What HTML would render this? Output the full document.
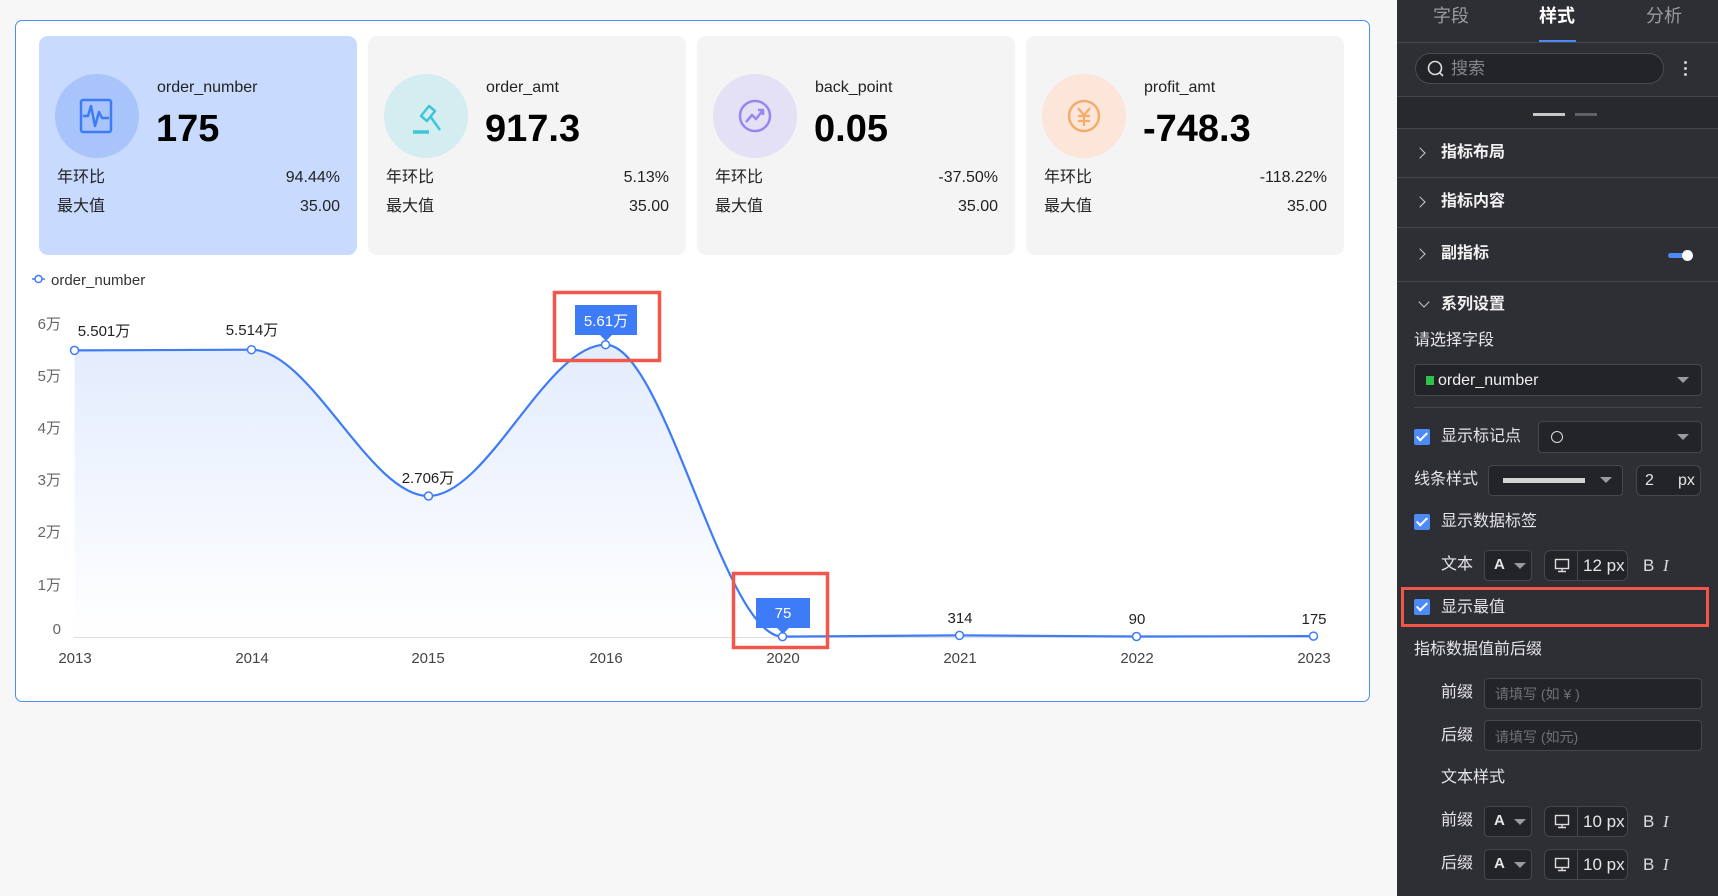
<!DOCTYPE html>
<html><head><meta charset="utf-8">
<style>
*{box-sizing:border-box;margin:0;padding:0}
body{width:1718px;height:896px;overflow:hidden;background:#f7f7f8;font-family:"Liberation Sans","Noto Sans CJK SC",sans-serif;position:relative}
.abs{position:absolute}
.outer{left:15px;top:20px;width:1355px;height:682px;border:1.5px solid #4b8cfa;border-radius:7px;background:#fff}
.card{position:absolute;top:36px;width:318px;height:219px;border-radius:9px;background:#f4f4f4}
.card .ic{position:absolute;left:16px;top:38px;width:84px;height:84px;border-radius:50%}
.card .t{position:absolute;left:118px;top:42px;font-size:16px;color:#222;line-height:20px}
.card .v{position:absolute;left:117px;top:71px;font-size:38px;font-weight:bold;color:#000;line-height:44px}
.card .r{position:absolute;left:18px;right:17px;font-size:16px;color:#222;display:flex;justify-content:space-between;align-items:center;height:22px;line-height:22px}
.panel{left:1397px;top:0;width:321px;height:896px;background:#2e2f34;color:#e6e6e8;font-size:16px}
.panel .sep{position:absolute;left:0;right:0;height:1px;background:#45464b}
.sec{position:absolute;left:44px;font-weight:bold;font-size:16px;color:#f2f2f2;line-height:20px}
.chev{position:absolute;left:22px;width:8px;height:8px;border-right:1.2px solid #ccc;border-top:1.2px solid #ccc;transform:rotate(45deg)}
.lbl{position:absolute;font-size:16px;color:#e6e6e8;line-height:20px}
.box{position:absolute;border:1px solid #46474c;background:#232428;border-radius:4px}
.cb{position:absolute;left:17px;width:16px;height:16px;background:#4c8bf5;border-radius:2px}
.cb:after{content:"";position:absolute;left:5px;top:1px;width:4px;height:9px;border-right:2px solid #fff;border-bottom:2px solid #fff;transform:rotate(45deg)}
.tri{position:absolute;width:0;height:0;border-left:6px solid transparent;border-right:6px solid transparent;border-top:6px solid #9a9ba0}
.bi{position:absolute;font-size:17px;color:#ddd;line-height:20px}
</style></head><body>
<div class="abs outer"></div>

<div class="card" style="left:39px;background:#c8dafd">
 <div class="ic" style="background:#a9c4fb"></div>
 <svg class="abs" style="left:36px;top:58px" width="44" height="44" viewBox="0 0 44 44"><rect x="6" y="6" width="30" height="32" rx="2" fill="none" stroke="#3e7bf7" stroke-width="2.5"/><path d="M8 22 L13 22 L16 12 L20 32 L24 18 L27 24 L34 24" fill="none" stroke="#3e7bf7" stroke-width="2.5" stroke-linejoin="round"/></svg>
 <div class="t">order_number</div><div class="v">175</div>
 <div class="r" style="top:131px"><span>年环比</span><span>94.44%</span></div>
 <div class="r" style="top:160px"><span>最大值</span><span>35.00</span></div>
</div>
<div class="card" style="left:368px">
 <div class="ic" style="background:#d4edf0"></div>
 <svg class="abs" style="left:36px;top:58px" width="44" height="44" viewBox="0 0 44 44"><path d="M17 22 L25 12 L31 17 L23 27 Z" fill="none" stroke="#3ec6d8" stroke-width="2.5" stroke-linejoin="round"/><path d="M26 22 L36 36" stroke="#3ec6d8" stroke-width="2.5"/><path d="M9 38 L25 38" stroke="#3ec6d8" stroke-width="3.5"/></svg>
 <div class="t">order_amt</div><div class="v">917.3</div>
 <div class="r" style="top:131px"><span>年环比</span><span>5.13%</span></div>
 <div class="r" style="top:160px"><span>最大值</span><span>35.00</span></div>
</div>
<div class="card" style="left:697px">
 <div class="ic" style="background:#e4e0f6"></div>
 <svg class="abs" style="left:36px;top:58px" width="44" height="44" viewBox="0 0 44 44"><circle cx="22" cy="22" r="15" fill="none" stroke="#9a85ef" stroke-width="2.5"/><path d="M13 28 L19 21 L23 25 L30 16 M25 16 L30 16 L30 21" fill="none" stroke="#9a85ef" stroke-width="2.5" stroke-linejoin="round"/></svg>
 <div class="t">back_point</div><div class="v">0.05</div>
 <div class="r" style="top:131px"><span>年环比</span><span>-37.50%</span></div>
 <div class="r" style="top:160px"><span>最大值</span><span>35.00</span></div>
</div>
<div class="card" style="left:1026px">
 <div class="ic" style="background:#fbe6d9"></div>
 <svg class="abs" style="left:36px;top:58px" width="44" height="44" viewBox="0 0 44 44"><circle cx="22" cy="22" r="15" fill="none" stroke="#f7ab6b" stroke-width="2.5"/><path d="M16 14 L22 21 L28 14 M22 21 L22 32 M16 22 L28 22 M16 27 L28 27" fill="none" stroke="#f7ab6b" stroke-width="2.2"/></svg>
 <div class="t">profit_amt</div><div class="v">-748.3</div>
 <div class="r" style="top:131px"><span>年环比</span><span>-118.22%</span></div>
 <div class="r" style="top:160px"><span>最大值</span><span>35.00</span></div>
</div>

<svg class="abs" style="left:0;top:0" width="1397" height="720">
 <defs><linearGradient id="g" x1="0" y1="0" x2="0" y2="1"><stop offset="0" stop-color="#e3ecfd"/><stop offset="1" stop-color="#ffffff"/></linearGradient></defs>
 <g font-family="Liberation Sans, Noto Sans CJK SC, sans-serif">
 <line x1="32" y1="279" x2="45" y2="279" stroke="#3e7bf7" stroke-width="1.5"/><circle cx="38.5" cy="279" r="3.5" fill="#fff" stroke="#3e7bf7" stroke-width="1.5"/>
 <text x="51" y="285" font-size="15" fill="#333">order_number</text>
 <g font-size="15" fill="#666" text-anchor="end">
  <text x="61" y="329">6万</text><text x="61" y="381">5万</text><text x="61" y="433">4万</text><text x="61" y="485">3万</text><text x="61" y="537">2万</text><text x="61" y="590">1万</text><text x="61" y="634">0</text>
 </g>
 <line x1="74" y1="637" x2="1314" y2="637" stroke="#d4d4d4" stroke-width="1.5"/>
 <path d="M74.5 350.4 C133.5 350.4 192.5 349.7 251.5 349.7 C310.5 349.7 369.5 496 428.5 496 C487.5 496 546.5 344.7 605.5 344.7 C664.5 344.7 723.5 636.6 782.5 636.6 C841.5 636.6 900.5 635.4 959.5 635.4 C1018.5 635.4 1077.5 636.5 1136.5 636.5 C1195.5 636.5 1254.5 636.1 1313.5 636.1 L1313.5 637 L74.5 637 Z" fill="url(#g)"/>
 <path d="M74.5 350.4 C133.5 350.4 192.5 349.7 251.5 349.7 C310.5 349.7 369.5 496 428.5 496 C487.5 496 546.5 344.7 605.5 344.7 C664.5 344.7 723.5 636.6 782.5 636.6 C841.5 636.6 900.5 635.4 959.5 635.4 C1018.5 635.4 1077.5 636.5 1136.5 636.5 C1195.5 636.5 1254.5 636.1 1313.5 636.1" fill="none" stroke="#3e7bf7" stroke-width="2.2"/>
 <g fill="#fff" stroke="#3e7bf7" stroke-width="1.5">
  <circle cx="74.5" cy="350.4" r="4"/><circle cx="251.5" cy="349.7" r="4"/><circle cx="428.5" cy="496" r="4"/><circle cx="605.5" cy="344.7" r="4"/><circle cx="782.5" cy="636.6" r="4"/><circle cx="959.5" cy="635.4" r="4"/><circle cx="1136.5" cy="636.5" r="4"/><circle cx="1313.5" cy="636.1" r="4"/>
 </g>
 <g font-size="15" fill="#222" text-anchor="middle">
  <text x="104" y="336">5.501万</text><text x="252" y="335">5.514万</text><text x="428" y="483">2.706万</text>
  <text x="960" y="623">314</text><text x="1137" y="624">90</text><text x="1314" y="624">175</text>
 </g>
 <rect x="575" y="305" width="62" height="30" fill="#3e7bf7"/><path d="M600 335 L606 341 L612 335Z" fill="#3e7bf7"/>
 <text x="606" y="326" font-size="15" fill="#fff" text-anchor="middle">5.61万</text>
 <rect x="756" y="598" width="54" height="30" fill="#3e7bf7"/><path d="M777 628 L783 634 L789 628Z" fill="#3e7bf7"/>
 <text x="783" y="618" font-size="15" fill="#fff" text-anchor="middle">75</text>
 <rect x="554.5" y="292.5" width="105" height="68" fill="none" stroke="#f2564a" stroke-width="3.5"/>
 <rect x="733.5" y="573.5" width="94" height="74" fill="none" stroke="#f2564a" stroke-width="3.5"/>
 <g font-size="15" fill="#444" text-anchor="middle">
  <text x="75" y="663">2013</text><text x="252" y="663">2014</text><text x="428" y="663">2015</text><text x="606" y="663">2016</text><text x="783" y="663">2020</text><text x="960" y="663">2021</text><text x="1137" y="663">2022</text><text x="1314" y="663">2023</text>
 </g>
 </g>
</svg>

<div class="abs panel">
 <div class="lbl" style="left:36px;top:6px;font-size:18px;color:#9a9ba0">字段</div>
 <div class="lbl" style="left:142px;top:6px;font-size:18px;color:#fff;font-weight:bold">样式</div>
 <div class="lbl" style="left:249px;top:6px;font-size:18px;color:#9a9ba0">分析</div>
 <div class="abs" style="left:142px;top:40px;width:37px;height:2px;background:#4c8bf5"></div>
 <div class="sep" style="top:42px"></div>
 <div class="abs" style="left:18px;top:53px;width:249px;height:31px;border-radius:16px;background:#232428;border:1px solid #4a4b50"></div>
 <svg class="abs" style="left:30px;top:60px" width="18" height="18" viewBox="0 0 18 18"><circle cx="8" cy="8" r="6.5" fill="none" stroke="#ddd" stroke-width="1.6"/><path d="M12.5 12.5 L16 16" stroke="#ddd" stroke-width="1.6"/></svg>
 <div class="lbl" style="left:54px;top:59px;font-size:17px;color:#85868b">搜索</div>
 <div class="abs" style="left:287px;top:61px;width:3px;height:3px;background:#ccc;border-radius:50%;box-shadow:0 6px 0 #ccc,0 12px 0 #ccc"></div>
 <div class="sep" style="top:96px"></div>
 <div class="abs" style="left:0;top:97px;width:321px;height:31px;background:#28292d"></div>
 <div class="abs" style="left:136px;top:113px;width:32px;height:3px;background:#c8c8c8"></div>
 <div class="abs" style="left:178px;top:113px;width:22px;height:3px;background:#606166"></div>
 <div class="sep" style="top:128px"></div>
 <div class="chev" style="top:149px;left:19px"></div><div class="sec" style="top:143px">指标布局</div>
 <div class="sep" style="top:177px"></div>
 <div class="chev" style="top:198px;left:19px"></div><div class="sec" style="top:192px">指标内容</div>
 <div class="sep" style="top:227px"></div>
 <div class="chev" style="top:250px;left:19px"></div><div class="sec" style="top:244px">副指标</div>
 <div class="abs" style="left:271px;top:253px;width:20px;height:5px;border-radius:3px;background:#4c8bf5"></div>
 <div class="abs" style="left:285px;top:250px;width:11px;height:11px;border-radius:50%;background:#fff"></div>
 <div class="sep" style="top:281px"></div>
 <div class="chev" style="top:298px;left:23px;transform:rotate(135deg)"></div><div class="sec" style="top:295px">系列设置</div>
 <div class="lbl" style="left:17px;top:331px">请选择字段</div>
 <div class="box" style="left:17px;top:364px;width:288px;height:32px"></div>
 <div class="abs" style="left:29px;top:376px;width:8px;height:9px;background:#2ec24a"></div>
 <div class="lbl" style="left:41px;top:371px;color:#eee">order_number</div>
 <div class="tri" style="left:280px;top:377px"></div>
 <div class="sep" style="top:407px;left:17px;right:16px"></div>
 <div class="cb" style="top:429px"></div><div class="lbl" style="left:44px;top:427px">显示标记点</div>
 <div class="box" style="left:141px;top:421px;width:164px;height:32px"></div>
 <div class="abs" style="left:154px;top:431px;width:12px;height:12px;border-radius:50%;border:1.5px solid #ddd"></div>
 <div class="tri" style="left:280px;top:434px"></div>
 <div class="lbl" style="left:17px;top:470px">线条样式</div>
 <div class="box" style="left:91px;top:465px;width:135px;height:31px"></div>
 <div class="abs" style="left:106px;top:478px;width:82px;height:5px;background:#d4d4d4"></div>
 <div class="tri" style="left:203px;top:477px"></div>
 <div class="box" style="left:239px;top:465px;width:65px;height:31px;border-radius:6px"></div>
 <div class="lbl" style="left:248px;top:471px">2</div><div class="lbl" style="left:281px;top:471px">px</div>
 <div class="cb" style="top:514px"></div><div class="lbl" style="left:44px;top:512px">显示数据标签</div>
 <div class="lbl" style="left:44px;top:555px">文本</div>
 <div class="box" style="left:87px;top:550px;width:48px;height:31px"></div>
 <div class="lbl" style="left:97px;top:555px;font-weight:bold;font-size:15px">A</div><div class="tri" style="left:117px;top:563px"></div>
 <div class="box" style="left:147px;top:550px;width:84px;height:31px;border-radius:6px"></div>
 <div class="abs" style="left:180px;top:550px;width:1px;height:31px;background:#46474c"></div>
 <svg class="abs" style="left:157px;top:558px" width="16" height="15"><rect x="1.5" y="1.5" width="13" height="9" fill="none" stroke="#ddd" stroke-width="1.4"/><path d="M4 13.5 H12 M8 10.5 V13.5" stroke="#ddd" stroke-width="1.4"/></svg>
 <div class="lbl" style="left:186px;top:556px;font-size:17px">12 px</div>
 <div class="bi" style="left:246px;top:556px">B</div><div class="bi" style="left:266px;top:556px;font-style:italic;font-family:'Liberation Serif',serif">I</div>
 <div class="abs" style="left:4px;top:587px;width:308px;height:40px;border:3px solid #f2564a"></div>
 <div class="cb" style="top:599px"></div><div class="lbl" style="left:44px;top:598px">显示最值</div>
 <div class="lbl" style="left:17px;top:640px">指标数据值前后缀</div>
 <div class="lbl" style="left:44px;top:683px">前缀</div>
 <div class="box" style="left:87px;top:678px;width:218px;height:31px"></div>
 <div class="lbl" style="left:98px;top:684px;font-size:14px;color:#6f7075">请填写 (如 ¥ )</div>
 <div class="lbl" style="left:44px;top:726px">后缀</div>
 <div class="box" style="left:87px;top:720px;width:218px;height:31px"></div>
 <div class="lbl" style="left:98px;top:727px;font-size:14px;color:#6f7075">请填写 (如元)</div>
 <div class="lbl" style="left:44px;top:768px">文本样式</div>
 <div class="lbl" style="left:44px;top:811px">前缀</div>
 <div class="box" style="left:87px;top:806px;width:48px;height:31px"></div>
 <div class="lbl" style="left:97px;top:811px;font-weight:bold;font-size:15px">A</div><div class="tri" style="left:117px;top:819px"></div>
 <div class="box" style="left:147px;top:806px;width:84px;height:31px;border-radius:6px"></div>
 <div class="abs" style="left:180px;top:806px;width:1px;height:31px;background:#46474c"></div>
 <svg class="abs" style="left:157px;top:814px" width="16" height="15"><rect x="1.5" y="1.5" width="13" height="9" fill="none" stroke="#ddd" stroke-width="1.4"/><path d="M4 13.5 H12 M8 10.5 V13.5" stroke="#ddd" stroke-width="1.4"/></svg>
 <div class="lbl" style="left:186px;top:812px;font-size:17px">10 px</div>
 <div class="bi" style="left:246px;top:812px">B</div><div class="bi" style="left:266px;top:812px;font-style:italic;font-family:'Liberation Serif',serif">I</div>
 <div class="lbl" style="left:44px;top:854px">后缀</div>
 <div class="box" style="left:87px;top:849px;width:48px;height:31px"></div>
 <div class="lbl" style="left:97px;top:854px;font-weight:bold;font-size:15px">A</div><div class="tri" style="left:117px;top:862px"></div>
 <div class="box" style="left:147px;top:849px;width:84px;height:31px;border-radius:6px"></div>
 <div class="abs" style="left:180px;top:849px;width:1px;height:31px;background:#46474c"></div>
 <svg class="abs" style="left:157px;top:857px" width="16" height="15"><rect x="1.5" y="1.5" width="13" height="9" fill="none" stroke="#ddd" stroke-width="1.4"/><path d="M4 13.5 H12 M8 10.5 V13.5" stroke="#ddd" stroke-width="1.4"/></svg>
 <div class="lbl" style="left:186px;top:855px;font-size:17px">10 px</div>
 <div class="bi" style="left:246px;top:855px">B</div><div class="bi" style="left:266px;top:855px;font-style:italic;font-family:'Liberation Serif',serif">I</div>
</div>
</body></html>
